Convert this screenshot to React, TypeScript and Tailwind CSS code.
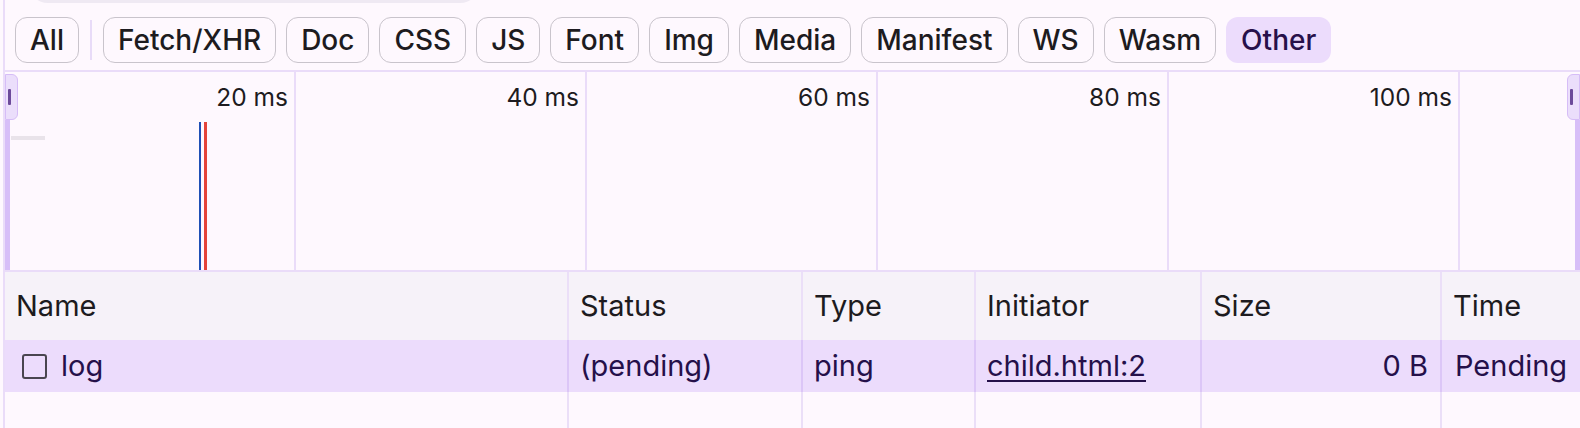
import React from 'react';

const filters = ['Fetch/XHR', 'Doc', 'CSS', 'JS', 'Font', 'Img', 'Media', 'Manifest', 'WS', 'Wasm'];

const ticks = ['20 ms', '40 ms', '60 ms', '80 ms', '100 ms', ''];

// column widths incl. right border
const cols = [
  { key: 'name', label: 'Name', w: 'w-[564px]' },
  { key: 'status', label: 'Status', w: 'w-[234px]' },
  { key: 'type', label: 'Type', w: 'w-[173px]' },
  { key: 'init', label: 'Initiator', w: 'w-[226px]' },
  { key: 'size', label: 'Size', w: 'w-[240px]' },
  { key: 'time', label: 'Time', w: 'flex-1' },
];

const FilterButton: React.FC<{ label: string; active?: boolean }> = ({ label, active }) => (
  <div
    className={`h-[46px] px-[14px] flex items-center rounded-[12px] text-[28px] font-medium leading-none ${
      active
        ? 'bg-[#ecdcfc] text-[#27104a] border-[1.5px] border-transparent'
        : 'border-[1.5px] border-[#c9c4cc] text-[#1d1b20]'
    }`}
  >
    {label}
  </div>
);

const Handle: React.FC<{ side: 'left' | 'right' }> = ({ side }) => (
  <div
    className={`absolute top-[2px] bottom-0 flex flex-col ${
      side === 'left' ? 'left-0 items-start' : 'right-0 items-end'
    }`}
  >
    <div
      className={`w-[13px] h-[46px] bg-[#ebdefb] border-[1.5px] border-[#d6bdf7] flex items-center ${
        side === 'left'
          ? 'rounded-br-[6px] rounded-tr-[6px] justify-start pl-[1.5px]'
          : 'rounded-bl-[6px] rounded-tl-[6px] justify-start pl-[2px]'
      }`}
    >
      <div className="w-[3px] h-[16px] rounded-[1px] bg-[#6c4a9a]" />
    </div>
    <div className="w-[5px] flex-1 bg-[#d7bef8]" />
  </div>
);

export default function App() {
  return (
    <div
      className="w-[1580px] h-[428px] overflow-hidden bg-[#fef8fe] pl-[3px]"
      style={{ fontFamily: 'Inter, "Noto Sans", sans-serif' }}
    >
      <div className="h-full flex flex-col border-l-2 border-[#eadcf9]">
        {/* filter input (scrolled) */}
        <div className="ml-[23px] -mt-[37px] w-[452px] h-[40px] shrink-0 rounded-[20px] bg-[#efe9f3]" />

        {/* filter chips */}
        <div className="flex items-center gap-[10px] pl-[10px] pt-[14px] pb-[7px] shrink-0">
          <FilterButton label="All" />
          <div className="w-[2px] h-[40px] mx-[1px] bg-[#e8dbf8]" />
          {filters.map((f) => (
            <FilterButton key={f} label={f} />
          ))}
          <FilterButton label="Other" active />
        </div>

        {/* overview timeline */}
        <div className="relative h-[202px] shrink-0 border-t-2 border-b-2 border-[#eadcf9]">
          <div className="flex h-full">
            {ticks.map((t, i) => (
              <div
                key={i}
                className={`h-full flex justify-end pr-[6px] pt-[10px] text-[24.5px] leading-[30px] text-[#1d1b20] ${
                  i < 5 ? 'w-[291px] shrink-0 border-r-2 border-[#eadcf9]' : 'flex-1'
                }`}
              >
                {t}
              </div>
            ))}
          </div>
          <div className="absolute left-[6px] top-[64px] w-[34px] h-[4px] bg-[#e9e3ea]" />
          <div className="absolute left-[194px] top-[50px] bottom-0 w-[2px] bg-[#1f4fb6]" />
          <div className="absolute left-[199px] top-[50px] bottom-0 w-[3px] bg-[#e5443a]" />
          <Handle side="left" />
          <Handle side="right" />
        </div>

        {/* request table */}
        <div className="flex-1 flex flex-col text-[29px]">
          <div className="flex h-[68px] bg-[#f6f2f9] shrink-0">
            {cols.map((c) => (
              <div
                key={c.key}
                className={`${c.w} shrink-0 flex items-center pl-[11px] text-[#1d1b20] ${
                  c.key !== 'time' ? 'border-r-2 border-[#ebdff8]' : ''
                }`}
              >
                {c.label}
              </div>
            ))}
          </div>
          <div className="flex h-[52px] bg-[#ecdcfc] text-[#25104a] shrink-0">
            <div className="w-[564px] shrink-0 flex items-center pl-[17px] gap-[14px] border-r-2 border-[#dcc6f7]">
              <div className="w-[25px] h-[25px] rounded-[3px] border-[2.5px] border-[#49454f]" />
              <span>log</span>
            </div>
            <div className="w-[234px] shrink-0 flex items-center pl-[11px] border-r-2 border-[#dcc6f7]">
              (pending)
            </div>
            <div className="w-[173px] shrink-0 flex items-center pl-[11px] border-r-2 border-[#dcc6f7]">
              ping
            </div>
            <div className="w-[226px] shrink-0 flex items-center pl-[11px] border-r-2 border-[#dcc6f7]">
              <span className="underline underline-offset-[4px] decoration-[2px]">child.html:2</span>
            </div>
            <div className="w-[240px] shrink-0 flex items-center justify-end pr-[12px] border-r-2 border-[#dcc6f7]">
              0 B
            </div>
            <div className="flex-1 flex items-center pl-[13px] whitespace-nowrap overflow-hidden">
              Pending
            </div>
          </div>
          <div className="flex flex-1">
            {cols.map((c) => (
              <div
                key={c.key}
                className={`${c.w} shrink-0 ${c.key !== 'time' ? 'border-r-2 border-[#ebdff8]' : ''}`}
              />
            ))}
          </div>
        </div>
      </div>
    </div>
  );
}
